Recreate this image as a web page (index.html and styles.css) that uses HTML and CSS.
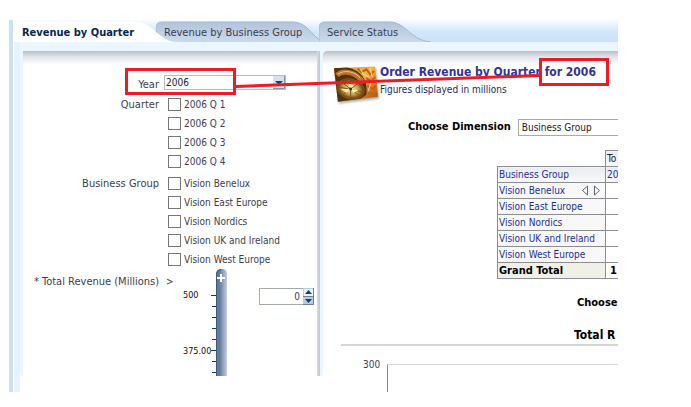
FILE: index.html
```html
<!DOCTYPE html>
<html lang="en">
<head>
<meta charset="utf-8">
<title>Revenue by Quarter</title>
<link rel="stylesheet" href="styles.css">
</head>
<body>
<div class="app">
  <nav class="tabs">
    <button class="tab tab-active" type="button">
      <svg class="tab-shape" width="170" height="22" aria-hidden="true"><path d="M0 22V7Q0 2 6 2H122C140 2 144 22 164 22Z" fill="#fff"/></svg>
      <span>Revenue by Quarter</span>
    </button>
    <button class="tab tab-second" type="button">
      <svg class="tab-shape" width="174" height="22" aria-hidden="true"><path d="M10 22C4 19 0 14 0 8Q0 2 6 2H138C154 3 158 22 170 22Z" fill="url(#tabfill)"/><path d="M10 22C4 19 0 14 0 8Q0 2 6 2H138C154 3 158 22 170 22" fill="none" stroke="#a5b8d2"/></svg>
      <span>Revenue by Business Group</span>
    </button>
    <button class="tab tab-third" type="button">
      <svg class="tab-shape" width="120" height="22" aria-hidden="true"><defs><linearGradient id="tabfill" x2="0" y2="1"><stop stop-color="#b2c3db"/><stop offset="1" stop-color="#cbdaec"/></linearGradient></defs><path d="M0 22V8Q0 2 6 2H70C88 2 90 20 112 22Z" fill="url(#tabfill)"/><path d="M0 22V8Q0 2 6 2H70C88 2 90 20 112 22" fill="none" stroke="#a5b8d2"/></svg>
      <span>Service Status</span>
    </button>
  </nav>
  <main class="panels">
    <form class="filters">
      <div class="field year-field">
        <label class="name" for="year">Year</label>
        <span class="year-box">
          <select id="year"><option>2006</option></select>
          <svg class="year-arrow" width="12" height="13" aria-hidden="true"><path d="M0 0H12V13H0Z" fill="#d8e0ee"/><path d="M11.500 0V12.500H0" fill="none" stroke="#8593ae"/><path d="M2 5H10L6 9Z" fill="#064a68"/></svg>
        </span>
      </div>
      <div class="field" role="group" aria-labelledby="quarter">
        <span class="name" id="quarter">Quarter</span>
        <div class="checks">
          <label><input type="checkbox">2006 Q 1</label>
          <label><input type="checkbox">2006 Q 2</label>
          <label><input type="checkbox">2006 Q 3</label>
          <label><input type="checkbox">2006 Q 4</label>
        </div>
      </div>
      <div class="field group-field" role="group" aria-labelledby="group">
        <span class="name" id="group">Business Group</span>
        <div class="checks">
          <label><input type="checkbox">Vision Benelux</label>
          <label><input type="checkbox">Vision East Europe</label>
          <label><input type="checkbox">Vision Nordics</label>
          <label><input type="checkbox">Vision UK and Ireland</label>
          <label><input type="checkbox">Vision West Europe</label>
        </div>
      </div>
      <div class="field total-field">
        <label class="name" for="total">* Total Revenue (Millions)</label>
        <span class="operator">&gt;</span>
        <div class="scale"><span>500</span><span>375.00</span></div>
        <svg class="slider" width="17" height="107" aria-hidden="true">
          <defs><linearGradient id="track"><stop stop-color="#5d7594"/><stop offset=".35" stop-color="#667d9c"/><stop offset="1" stop-color="#c4cfdf"/></linearGradient></defs>
          <path d="M5 107V5Q5 0 10 0H11Q16 0 16 5V107Z" fill="url(#track)"/>
          <path d="M5.500 107V5Q6 1 10 0.500" fill="none" stroke="#40597a"/>
          <path d="M6 9H14M10 5V13" stroke="#fff" stroke-width="2"/>
          <path d="M0 26.500H5M1 37.500H5M1 48.500H5M1 59.500H5M1 70.500H5M0 81.500H5M1 92.500H5M1 103.500H5" stroke="#003f7d"/>
        </svg>
        <span class="spin">
          <input id="total" type="text" value="0">
          <svg width="11" height="17" aria-hidden="true"><path d="M0 0H11V17H0Z" fill="#b9c9df"/><path d="M1 1H10V8H1Z" fill="#edf2f9"/><path d="M0 8.500H11M10.500 0V16.500H0" fill="none" stroke="#6e7f99"/><path d="M2 6L5.500 2L9 6ZM2 11H9L5.500 15Z" fill="#064a68"/></svg>
        </span>
      </div>
    </form>
    <section class="report">
      <header class="report-head">
        <svg class="compass" width="47" height="40" viewBox="0 0 48 40" aria-hidden="true">
          <defs>
            <linearGradient id="map" x2="1" y2="1"><stop stop-color="#d98a20"/><stop offset=".45" stop-color="#f2b34c"/><stop offset="1" stop-color="#a94a05"/></linearGradient>
            <radialGradient id="dial"><stop stop-color="#fff0a8"/><stop offset=".6" stop-color="#c39a45"/><stop offset="1" stop-color="#5a3408"/></radialGradient>
            <filter id="soft"><feGaussianBlur stdDeviation="1"/></filter>
          </defs>
          <path d="M3 6L44 3L47 34L6 39Z" fill="#777" opacity=".6" filter="url(#soft)"/>
          <path d="M1 3L43 1L46 32L5 37Z" fill="url(#map)"/>
          <path d="M25 3L29 7L34 4L38 9L42 6M34 13L39 16L43 12M35 21L41 24L44 20M36 29L41 28" fill="none" stroke="#ca5c0b" stroke-width="2"/>
          <path d="M28 4L31 9L37 12M38 3L40 12M39 17L36 26" fill="none" stroke="#ffe087"/>
          <path d="M1 3L14 2C28 4 36 14 34 30L28 34L5 37Z" fill="#54310d"/>
          <path d="M4 10C10 4 24 6 31 18" fill="none" stroke="#b9752a" stroke-width="5"/>
          <path d="M5 9C12 4 22 6 28 13" fill="none" stroke="#f4c67a"/>
          <ellipse cx="18" cy="24" rx="14" ry="10" transform="rotate(14 18 24)" fill="url(#dial)" stroke="#8a5a18"/>
          <path d="M18 15V33M6 22L30 27M10 30L26 18M10 18L27 31" stroke="#7a5420"/>
          <path d="M18 24L15 17L21 21ZM18 24L26 25L21 28ZM18 24L8 24L14 28Z" fill="#fff1b6"/>
          <circle cx="18" cy="24" r="1.500" fill="#4c2b05"/>
        </svg>
        <div>
          <h1>Order Revenue by Quarter for 2006</h1>
          <p>Figures displayed in millions</p>
        </div>
      </header>
      <div class="dimension">
        <label for="dimension">Choose Dimension</label>
        <select id="dimension"><option>Business Group</option></select>
      </div>
      <table>
        <thead>
          <tr><td class="blank"></td><th class="total-head">To</th></tr>
          <tr class="shade"><th>Business Group</th><th>20</th></tr>
        </thead>
        <tbody>
          <tr><th><span class="move-row">Vision Benelux <svg width="20" height="11" aria-hidden="true"><path d="M6.500 1V10L1.500 5.500ZM13.500 1V10L18.500 5.500Z" fill="none" stroke="#667"/></svg></span></th><td></td></tr>
          <tr><th>Vision East Europe</th><td></td></tr>
          <tr><th>Vision Nordics</th><td></td></tr>
          <tr><th>Vision UK and Ireland</th><td></td></tr>
          <tr><th>Vision West Europe</th><td></td></tr>
          <tr class="grand"><th>Grand Total</th><td>1</td></tr>
        </tbody>
      </table>
      <p class="measure">Choose</p>
      <h2>Total R</h2>
      <div class="chart"><span>300</span><div class="plot"></div></div>
    </section>
  </main>
  <svg class="marks" width="609" height="100" aria-hidden="true">
    <g fill="none" stroke="#ed1c24" stroke-width="3"><path d="M117.500 49.500H225.500V73.500H117.500Z"/><path d="M531.500 39.500H598.500V64.500H531.500Z"/><path d="M227 66.500L531 55.500"/></g>
  </svg>
</div>
</body>
</html>
```
FILE: styles.css
```css
* { box-sizing: border-box; }
body {
  margin: 0;
  padding: 20px 73px 15px 9px;
  background: #fff;
  color: #3d3d4f;
  font: 10px/16px "DejaVu Sans Condensed", "DejaVu Sans", sans-serif;
}
h1, h2, p { margin: 0; }
svg { display: block; flex: none; }
button, input, select { font: inherit; color: inherit; }

.app {
  position: relative;
  overflow: hidden;
  padding-left: 5px;
  background: linear-gradient(90deg, #cfdff2 4px, #fff 4px);
}
.tabs {
  display: flex;
  height: 22px;
  background: linear-gradient(#fafdff, #d4e7fb 50%, #cbe1f8);
}
.tab {
  position: relative;
  padding: 4px 0 0 8px;
  border: 0;
  background: none;
  text-align: left;
  font-size: 11px;
  line-height: 18px;
  white-space: nowrap;
}
.tab span { position: relative; }
.tab-shape { position: absolute; left: 0; top: 0; }
.tab-active { z-index: 1; width: 142px; color: #09264c; font-weight: bold; }
.tab-second { width: 163px; }
.tab-third { width: 112px; }

.panels {
  display: flex;
  align-items: flex-start;
  padding: 9px 0 0 6px;
  background:
    linear-gradient(90deg, #e6f3ff 6px, transparent 6px),
    linear-gradient(#ecf6ff, #ecf6ff) 0 0 / 100% 9px no-repeat;
}
.filters {
  flex: none;
  width: 303px;
  height: 325px;
  overflow: hidden;
  border: solid #ebf6ff;
  border-width: 0 3px;
  border-radius: 0 0 3px 3px;
  background:
    linear-gradient(90deg, #d8dce4, #bfc5cf) right / 3px 100% no-repeat,
    linear-gradient(#b9bfca, #e1e4e9 6px, #fff 14px);
  background-clip: padding-box;
  padding-top: 24px;
}
.field { display: flex; }
.name { flex: none; width: 136px; font-size: 11px; text-align: right; white-space: nowrap; }
.year-field { height: 20px; }
.year-box { position: relative; margin-left: 5px; width: 122px; height: 15px; }
.year-box select {
  display: block;
  appearance: none;
  width: 100%;
  height: 15px;
  padding: 0 1px;
  border: 1px solid #b9bdc2;
  border-radius: 0;
  background: #fff;
  color: #222;
  line-height: 13px;
}
.year-arrow { position: absolute; right: 1px; top: 1px; }
.checks { margin-left: 9px; }
.checks label { display: flex; align-items: center; height: 19px; white-space: nowrap; }
.checks input {
  appearance: none;
  width: 13px;
  height: 13px;
  margin: 0 3px 0 0;
  border: 1px solid #777;
  background: #fff;
}
.field > .name { line-height: 20px; }
.group-field { margin-top: 3px; }
.total-field > .name, .operator { line-height: 26px; }
.operator { width: 7px; margin-left: 7px; }
.scale { display: flex; flex-direction: column; gap: 40px; width: 28px; margin: 18px 0 0 10px; font-size: 9px; color: #111; }
.spin { display: flex; width: 55px; height: 17px; margin: 19px 0 0 31px; }
.spin input {
  width: 44px;
  height: 17px;
  padding: 0 3px;
  border: solid #a5a9b2;
  border-width: 1px 0 1px 1px;
  background: #fff;
  text-align: right;
}

.report {
  flex: 1;
  min-width: 0;
  height: 341px;
  overflow: hidden;
  padding: 14px 0 0 10px;
  border-radius: 4px 0 0 0;
  background: linear-gradient(#b9bfca, #e1e4e9 6px, #fff 14px);
}
.report-head { display: flex; height: 46px; white-space: nowrap; color: #1d2a55; }
.report-head h1 { font-size: 12px; line-height: 15px; color: #333399; }
.report-head p { line-height: 20px; }
.dimension { display: flex; margin-left: 75px; height: 17px; margin-top: 8px; gap: 7px; }
.dimension label { flex: none; font-size: 11px; font-weight: bold; color: #000; white-space: nowrap; }
.dimension select {
  appearance: none;
  flex: none;
  width: 160px;
  height: 17px;
  padding: 0 3px;
  border: 1px solid #aaa;
  border-radius: 0;
  background: #fff;
  color: #222;
}
table { width: 200px; margin: 14px 0 0 164px; border-collapse: collapse; table-layout: fixed; white-space: nowrap; }
th, td { height: 16px; padding: 0 1px; border: 1px solid #8d8d94; line-height: 15px; text-align: left; font-weight: normal; color: #1a3296; }
th:first-child, td:first-child { width: 108px; }
tbody th { background: #f8f8f9; }
.shade th, .total-head { background: linear-gradient(#eaecef, #f8f9fb); }
.total-head { color: #222; }
.blank { border: 0; }
.move-row { display: flex; align-items: center; justify-content: space-between; padding-right: 3px; }
.grand th, .grand td { font-size: 11px; font-weight: bold; color: #000; }
.grand th { background: #f0f0e9; }
.grand td { padding-left: 4px; }
.measure { margin: 16px 0 0 244px; font-size: 11px; font-weight: bold; color: #000; }
h2 { margin: 16px 0 0 8px; padding-left: 233px; border-bottom: 2px solid #d5d5e0; font-size: 12px; line-height: 17px; color: #000; white-space: nowrap; }
.chart { display: flex; margin: 11px 0 0 30px; line-height: 15px; gap: 5px; }
.chart span { flex: none; width: 19px; }
.plot { flex: 1; height: 28px; margin-top: 7px; border-left: 1px solid #8a86a8; border-top: 1px solid #d9d9e2; }
.marks { position: absolute; left: 0; top: 0; pointer-events: none; }
```
